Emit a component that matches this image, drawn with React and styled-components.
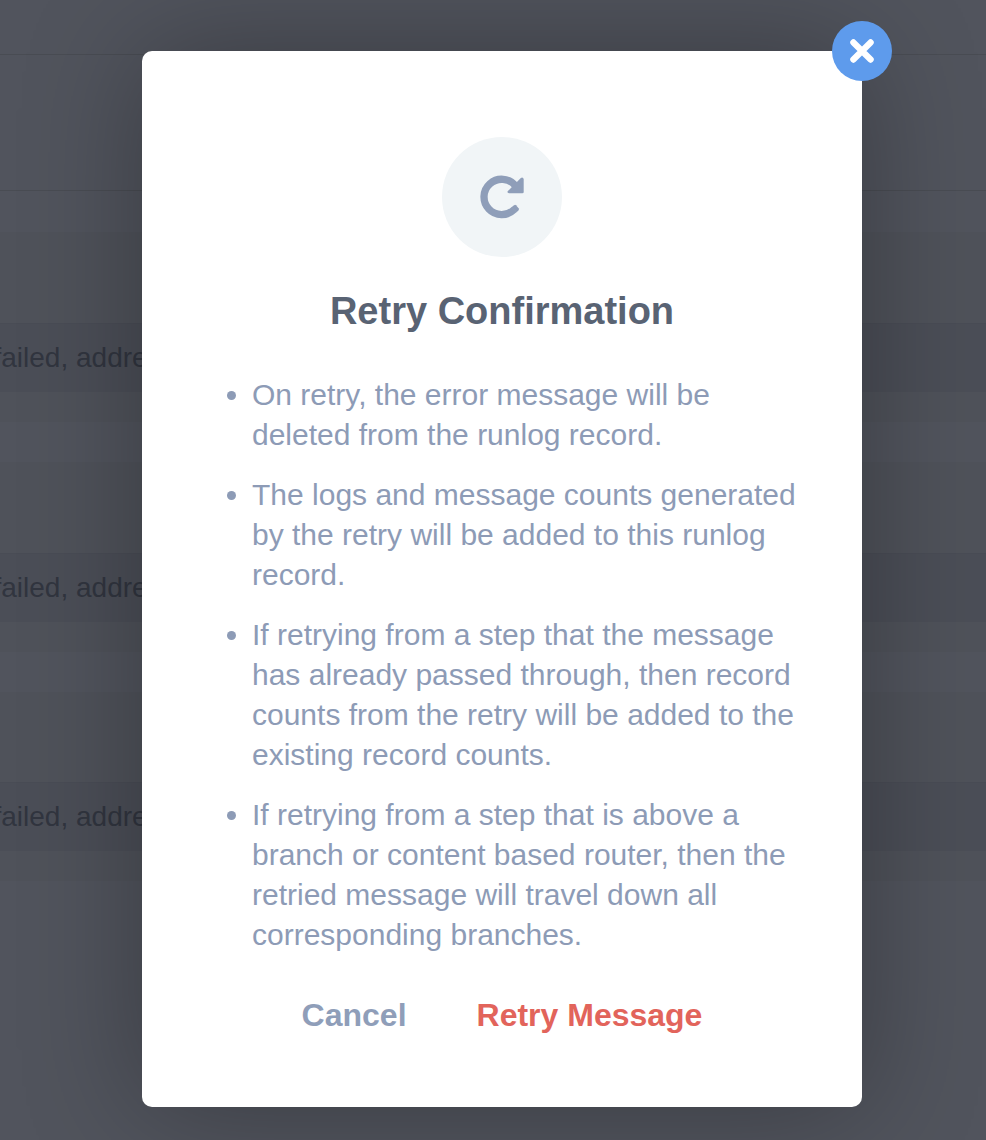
import React from "react";
import styled, { createGlobalStyle } from "styled-components";

const GlobalStyle = createGlobalStyle`
  * { box-sizing: border-box; }
  body {
    margin: 0;
    font-family: "Liberation Sans", Arial, Helvetica, sans-serif;
    overflow: hidden;
  }
`;

const tones = {
  base: "#51545d",
  muted: "#4f525a",
  log: "#4b4e57",
};

const Page = styled.main`
  position: relative;
  height: 1140px;
  overflow: hidden;
  background: ${tones.base};
`;

const Band = styled.div`
  height: ${(p) => p.$height}px;
  background: ${(p) => tones[p.$tone]};
  border-bottom: ${(p) => (p.$ruled ? "1px solid #494c53" : "none")};
`;

const LogRow = styled(Band)`
  display: flex;
  align-items: center;
  margin-left: -6.5px;
  border-top: 1px solid #494c55;
  color: #31353f;
  font-size: 28px;
  white-space: nowrap;
`;

const Overlay = styled.div`
  position: absolute;
  inset: 0;
  padding: 51px 124px 33px 142px;
`;

const Dialog = styled.section`
  position: relative;
  display: flex;
  flex-direction: column;
  align-items: center;
  width: 720px;
  height: 1056px;
  padding-top: 86px;
  border-radius: 10px;
  background: #fff;
  box-shadow: 0 0 120px rgba(0, 0, 0, 0.3);
`;

const CloseButton = styled.button`
  position: absolute;
  top: -30px;
  right: -30px;
  display: flex;
  align-items: center;
  justify-content: center;
  width: 60px;
  height: 60px;
  padding: 0;
  border: 0;
  border-radius: 50%;
  background: #5e9bec;
  color: #fff;
`;

const IconCircle = styled.div`
  display: flex;
  align-items: center;
  justify-content: center;
  width: 120px;
  height: 120px;
  border-radius: 50%;
  background: #f1f5f7;
  color: #8f9eb9;
`;

const Title = styled.h1`
  margin: 32px 0 0;
  color: #596373;
  font-size: 38px;
  line-height: 44px;
`;

const Notes = styled.ul`
  align-self: stretch;
  margin: 42px 60px 0 80px;
  padding: 0 0 0 30px;
  color: #8d9bb6;
  font-size: 30px;
  line-height: 40px;
`;

const Note = styled.li`
  margin-bottom: 20px;
`;

const Actions = styled.div`
  display: flex;
  gap: 70px;
  margin-top: 20px;
`;

const ActionButton = styled.button`
  padding: 0;
  border: 0;
  background: none;
  color: ${(p) => (p.$danger ? "#e2645b" : "#8f9eb9")};
  font: inherit;
  font-size: 32px;
  font-weight: 700;
  line-height: 40px;
`;

const CloseIcon = () => (
  <svg width="24" height="24" viewBox="0 0 24 24" stroke="currentColor" strokeWidth="6.3" strokeLinecap="round">
    <path d="M3.4 3.4 20.6 20.6M20.6 3.4 3.4 20.6" />
  </svg>
);

const RetryIcon = () => (
  <svg width="44" height="44" viewBox="0 0 44 44">
    <path
      d="M35.3 10.6A17.7 17.7 0 1 0 34.2 34.5"
      fill="none"
      stroke="currentColor"
      strokeWidth="7.3"
    />
    <path
      d="M31.3 32.3 34.2 30.2Q35.2 29.5 36 30.3L38.6 33.2Q39.4 34.2 38.5 35.3L36.7 37.2Z"
      fill="currentColor"
    />
    <path
      d="M43.7 4V17Q43.7 18.3 42.4 18.3H29Q26.6 17.7 27.9 16L40.8 3Q42.8 1.4 43.7 4Z"
      fill="currentColor"
    />
  </svg>
);

const notes = [
  "On retry, the error message will be deleted from the runlog record.",
  "The logs and message counts generated by the retry will be added to this runlog record.",
  "If retrying from a step that the message has already passed through, then record counts from the retry will be added to the existing record counts.",
  "If retrying from a step that is above a branch or content based router, then the retried message will travel down all corresponding branches.",
];

const entries = [
  { gap: 41, detail: 91, log: 69 },
  { gap: 40, detail: 91, log: 69 },
  { gap: 40, detail: 90, log: 69 },
];

export default function App() {
  return (
    <>
      <GlobalStyle />
      <Page>
        <Band $height={55} $tone="base" $ruled />
        <Band $height={136} $tone="base" $ruled />
        {entries.map((entry, i) => (
          <React.Fragment key={i}>
            <Band $height={entry.gap} $tone="base" />
            <Band $height={entry.detail} $tone="muted" />
            <LogRow $height={entry.log} $tone="log">failed, address</LogRow>
            <Band $height={30} $tone="muted" />
          </React.Fragment>
        ))}
        <Overlay>
          <Dialog role="dialog" aria-labelledby="dialog-title">
            <CloseButton aria-label="Close"><CloseIcon /></CloseButton>
            <IconCircle><RetryIcon /></IconCircle>
            <Title id="dialog-title">Retry Confirmation</Title>
            <Notes>
              {notes.map((note) => <Note key={note}>{note}</Note>)}
            </Notes>
            <Actions>
              <ActionButton>Cancel</ActionButton>
              <ActionButton $danger>Retry Message</ActionButton>
            </Actions>
          </Dialog>
        </Overlay>
      </Page>
    </>
  );
}
